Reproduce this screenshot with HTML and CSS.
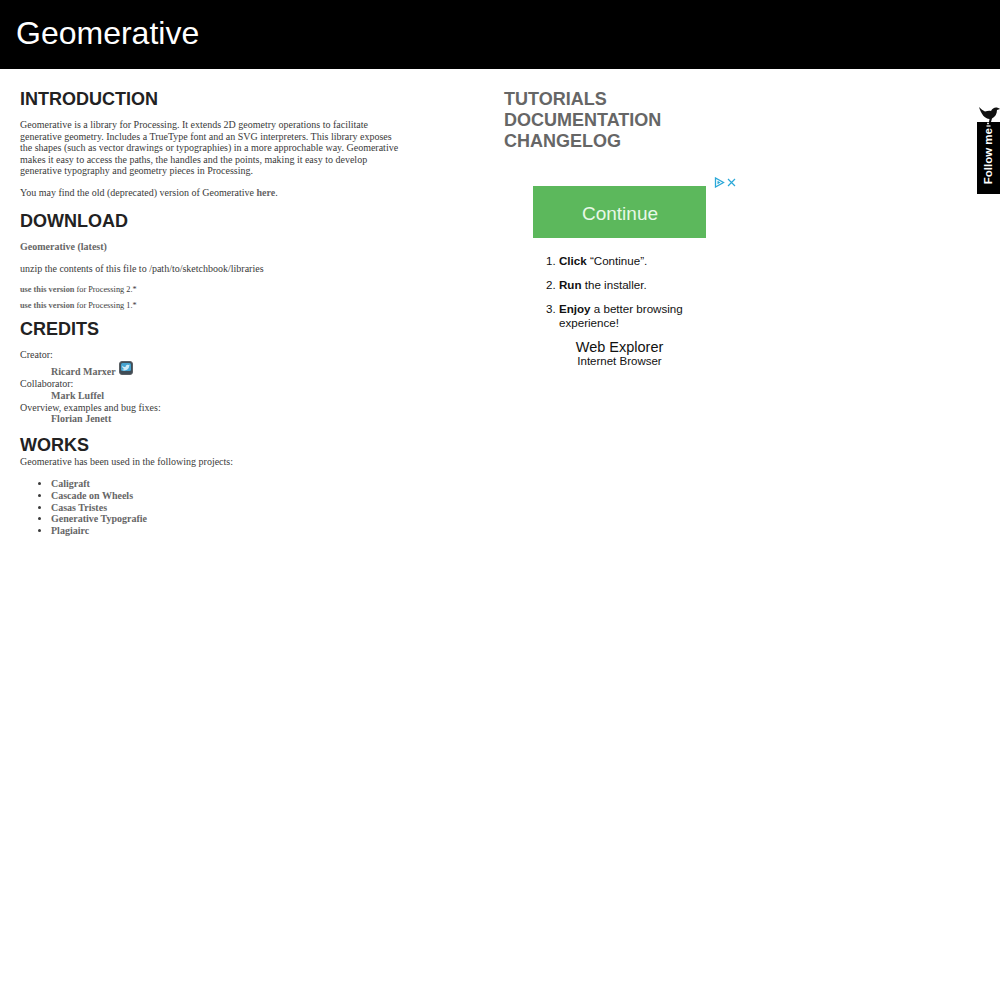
FILE: index.html
```html
<!DOCTYPE html>
<html lang="en">
<head>
    <meta charset="UTF-8">
    <title>Geomerative</title>
    <link rel="stylesheet" href="styles.css">
</head>
<body>
    <div class="header">
        <h1>Geomerative</h1>
    </div>

    <div class="content">
        <div class="main">
            <h2 class="first">INTRODUCTION</h2>
            <p>Geomerative is a library for Processing. It extends 2D geometry operations to facilitate generative geometry. Includes a TrueType font and an SVG interpreters. This library exposes the shapes (such as vector drawings or typographies) in a more approchable way. Geomerative makes it easy to access the paths, the handles and the points, making it easy to develop generative typography and geometry pieces in Processing.</p>
            <p>You may find the old (deprecated) version of Geomerative <a href="#">here</a>.</p>

            <h2>DOWNLOAD</h2>
            <p><a href="#">Geomerative (latest)</a></p>
            <p>unzip the contents of this file to /path/to/sketchbook/libraries</p>
            <p class="small"><a href="#">use this version</a> for Processing 2.*</p>
            <p class="small"><a href="#">use this version</a> for Processing 1.*</p>

            <h2>CREDITS</h2>
            <dl>
                <dt>Creator:</dt>
                <dd class="with-icon">
                    <a href="#">Ricard Marxer</a>
                    <svg class="twitter" width="14" height="14" viewBox="0 0 14 14">
                        <rect x="0.5" y="0.5" width="13" height="13" rx="2.5" fill="#3f4c56" stroke="#5a5f64"/>
                        <rect x="2" y="2" width="10" height="8" rx="1.5" fill="#45a3d0"/>
                        <path d="M3 4.500c1 1 2 1.500 3.500 1.500C6.500 4.500 8 3 9.500 4L11 3.700 10.200 4.800C10.200 7.500 8 9.500 5.500 9.500 4.500 9.500 3.500 9.200 3 8.800 4 8.800 4.800 8.500 5.300 8 4 7.500 3 6 3 4.500z" fill="#cfeaf6"/>
                    </svg>
                </dd>
                <dt>Collaborator:</dt>
                <dd><a href="#">Mark Luffel</a></dd>
                <dt>Overview, examples and bug fixes:</dt>
                <dd><a href="#">Florian Jenett</a></dd>
            </dl>

            <h2 class="works">WORKS</h2>
            <p class="lead">Geomerative has been used in the following projects:</p>
            <ul>
                <li><a href="#">Caligraft</a></li>
                <li><a href="#">Cascade on Wheels</a></li>
                <li><a href="#">Casas Tristes</a></li>
                <li><a href="#">Generative Typografie</a></li>
                <li><a href="#">Plagiairc</a></li>
            </ul>
        </div>

        <div class="side">
            <h2><a href="#">TUTORIALS</a></h2>
            <h2><a href="#">DOCUMENTATION</a></h2>
            <h2><a href="#">CHANGELOG</a></h2>

            <div class="ad">
                <div class="ad-marks">
                    <svg width="11" height="11" viewBox="0 0 11 11">
                        <path d="M1.500 1v9l8-4.500z" fill="none" stroke="#2aa8d8" stroke-width="1.300"/>
                        <path d="M3.500 3.800v3.400l3-1.700z" fill="#2aa8d8"/>
                    </svg>
                    <svg width="9" height="9" viewBox="0 0 9 9">
                        <path d="M1 1l7 7M8 1L1 8" stroke="#2aa8d8" stroke-width="1.200"/>
                    </svg>
                </div>
                <div class="ad-button">Continue</div>
                <ol>
                    <li><b>Click</b> “Continue”.</li>
                    <li><b>Run</b> the installer.</li>
                    <li><b>Enjoy</b> a better browsing experience!</li>
                </ol>
                <div class="ad-brand">Web Explorer</div>
                <div class="ad-sub">Internet Browser</div>
            </div>
        </div>
    </div>

    <div class="follow">
        <svg class="bird" width="22" height="22" viewBox="0 0 22 22">
            <path d="M1 1c2 2 4 3.500 6 4.500 2-.5 4-1 6-.5 1-2 3-3.500 5-3.500 1.500 0 2.500 .5 4 1.500L19 4c0 4-2 7-5 8.500l-1 3.500h-2l.5-3C7 13 3 8 1 1z" fill="#111"/>
            <path d="M9 17.500h2M8.500 20h4" stroke="#ddd" stroke-width="1.300"/>
        </svg>
        <div class="follow-box"><span>Follow me</span></div>
    </div>
</body>
</html>
```

FILE: styles.css
```css
body {
    font-family: "Liberation Serif", serif;
    font-size: 10px;
    line-height: 11.6px;
    color: #3a3a3a;
    background-color: #fff;
    margin: 0;
}
a {
    color: #666;
    font-weight: bold;
    text-decoration: none;
}
.header {
    background-color: #000;
    height: 67px;
    padding: 0 0 2px 16px;
    display: flex;
    align-items: center;
}
.header h1 {
    font-family: "Liberation Sans", sans-serif;
    font-size: 32px;
    line-height: 37px;
    font-weight: normal;
    color: #fff;
    margin: 0;
}
.content {
    display: flex;
    padding: 20px 0 0 20px;
}
.main {
    width: 380px;
    margin-right: 104px;
}
h2 {
    font-family: "Liberation Sans", sans-serif;
    font-size: 18px;
    line-height: 21px;
    font-weight: bold;
    color: #222;
    margin: 0 0 9px;
    padding-top: 1px;
}
.first {
    padding-top: 0;
}
p {
    margin: 0 0 10.5px;
}
.small {
    font-size: 8.3px;
    line-height: 10px;
    margin-bottom: 6.5px;
}
dl {
    margin: 0 0 9px;
}
dd {
    margin-left: 31px;
}
.with-icon {
    height: 17px;
    padding-bottom: 1px;
    display: flex;
    align-items: flex-end;
    gap: 3px;
}
.twitter {
    align-self: flex-start;
    margin-top: 1px;
}
.works {
    margin-bottom: 0;
}
.lead {
    margin-bottom: 11px;
}
ul {
    margin: 0;
    padding-left: 31px;
}
.side h2 {
    margin: 0;
    padding-top: 0;
}
.side h2 a {
    color: #666;
}
.ad {
    width: 204px;
    margin: 34px 0 0 29px;
    position: relative;
    font-family: "Liberation Sans", sans-serif;
    color: #111;
}
.ad-marks {
    position: absolute;
    top: -9px;
    right: 1px;
    display: flex;
    align-items: center;
    gap: 2px;
}
.ad-button {
    width: 172px;
    height: 49px;
    padding: 3px 0 0 1px;
    background-color: #5cb85c;
    color: #e8f8e8;
    font-size: 19px;
    display: flex;
    align-items: center;
    justify-content: center;
}
.ad ol {
    font-size: 11.6px;
    line-height: 14px;
    margin: 16px 0 0;
    padding-left: 26px;
}
.ad li {
    margin-bottom: 10px;
}
.ad-brand {
    width: 173px;
    text-align: center;
    font-size: 14.5px;
    line-height: 17px;
    margin-top: -1px;
}
.ad-sub {
    width: 173px;
    text-align: center;
    font-size: 11.5px;
    line-height: 12px;
    margin-top: -1px;
}
.follow {
    position: absolute;
    top: 106px;
    right: 0;
    width: 23px;
}
.bird {
    display: block;
    position: relative;
    z-index: 1;
    margin: 0 0 -6px 1px;
}
.follow-box {
    background-color: #000;
    height: 68px;
    padding-bottom: 4px;
    display: flex;
    align-items: center;
    justify-content: center;
}
.follow-box span {
    writing-mode: vertical-rl;
    transform: rotate(180deg);
    font-family: "Liberation Sans", sans-serif;
    font-weight: bold;
    font-size: 11.5px;
    color: #fff;
}
```
